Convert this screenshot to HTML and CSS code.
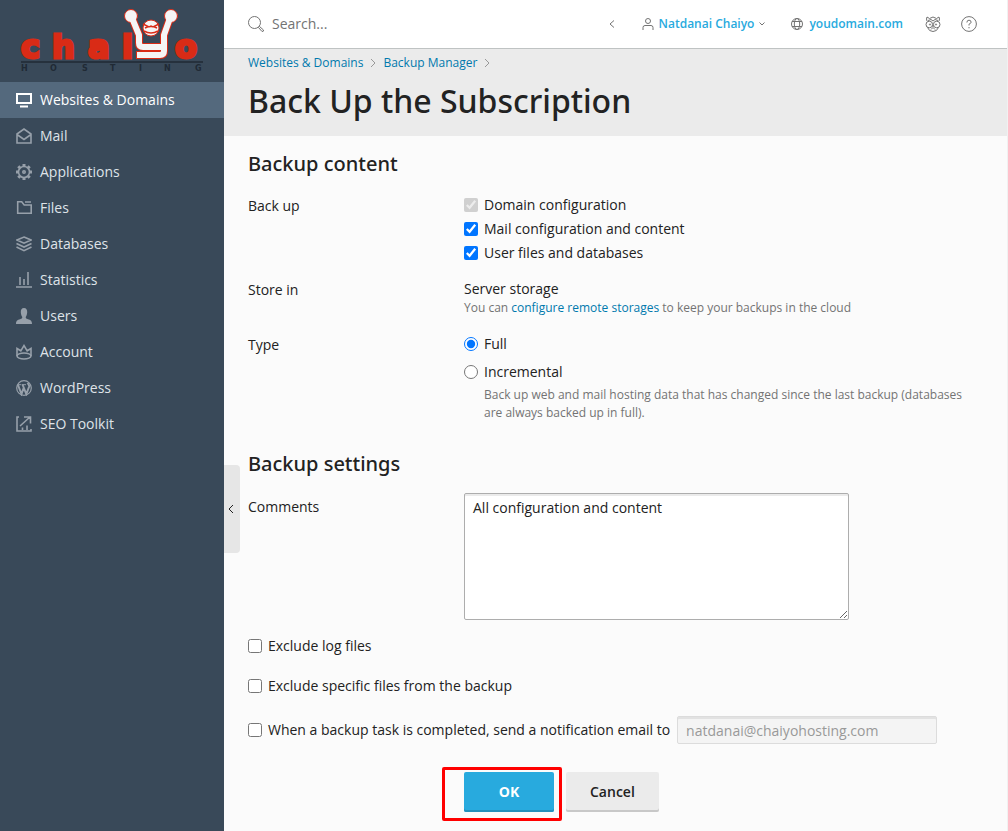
FILE: index.html
```html
<!DOCTYPE html>
<html lang="en">
<head>
  <meta charset="UTF-8">
  <meta name="viewport" content="width=device-width, initial-scale=1.0">
  <title>Back Up the Subscription</title>
  <link rel="stylesheet" href="styles.css">
</head>
<body>
  <div class="page">
    <aside class="sidebar">
      <a href="#" class="logo" aria-label="Chaiyo Hosting">
        <svg width="224" height="82" viewBox="0 0 224 82">
          <text class="logo-name" y="58" x="21 52 88 122 175">chaio</text>
          <path d="M21 62h182" stroke="#26313d" stroke-width="2"/>
          <text class="logo-sub" y="71" x="21 50 82 110 139 164 195">HOSTING</text>
          <!-- cheering figure -->
          <g fill="none" stroke-linecap="square" stroke-linejoin="round">
            <path d="M132 18l7 17v8q0 4 4 4h20M170 18l-6 17v16q0 4-4 4h-20" stroke="#d92b16" stroke-width="8"/>
            <circle cx="131" cy="16" r="6.5" fill="#f5f5f5" stroke="#d92b16"/>
            <circle cx="171" cy="16" r="6.5" fill="#f5f5f5" stroke="#d92b16"/>
            <path d="M132 18l7 17v8q0 4 4 4h20M170 18l-6 17v16q0 4-4 4h-20" stroke="#f5f5f5" stroke-width="6"/>
          </g>
          <path d="M140 51h20" stroke="#d92b16"/>
          <circle cx="151" cy="28" r="8" fill="#f5f5f5" stroke="#d92b16"/>
          <path d="M143 24l6 3 2-1 2 1 6-3M145 28q6-3 12 0M144 31q7 4 14 0" fill="none" stroke="#d92b16" stroke-width="1.5"/>
        </svg>
      </a>
      <nav class="menu">
        <a href="#" class="menu-item active">
          <svg class="icon" viewBox="0 0 16 16"><path d="M1 2h14v9H1zM4 14.5h8" stroke-width="2"/></svg>
          Websites &amp; Domains
        </a>
        <a href="#" class="menu-item">
          <svg class="icon" viewBox="0 0 16 16"><path d="M1 6l7-5 7 5v9H1zM1 6.5l7 5 7-5"/></svg>
          Mail
        </a>
        <a href="#" class="menu-item">
          <svg class="icon" viewBox="0 0 16 16"><circle cx="8" cy="8" r="5.500"/><circle cx="8" cy="8" r="1.200"/><path d="M8 0v2.500M8 13.500v2.500M0 8h2.500M13.500 8h2.500M2.300 2.300l1.700 1.700M12 12l1.700 1.700M13.700 2.300L12 4M4 12l-1.700 1.700" stroke-width="3"/></svg>
          Applications
        </a>
        <a href="#" class="menu-item">
          <svg class="icon" viewBox="0 0 16 16"><path d="M1.700 1.700h4l2.500 3.300h7v8.300H1.700zM9 2h6"/></svg>
          Files
        </a>
        <a href="#" class="menu-item">
          <svg class="icon" viewBox="0 0 16 16"><path d="M8 1l7 3-7 3.200L1 4zM.5 7.500L8 11l7.500-3.500M.5 11L8 14.700 15.500 11"/></svg>
          Databases
        </a>
        <a href="#" class="menu-item">
          <svg class="icon" viewBox="0 0 16 16"><path d="M0 15h16M4 5v8M8 7v6M12 0v13"/></svg>
          Statistics
        </a>
        <a href="#" class="menu-item">
          <svg class="icon solid" viewBox="0 0 16 16"><path d="M8 0c2.300 0 3.300 1.700 3.200 4.200C11.100 6.500 10.300 8 9.700 9c0 1.400.6 1.700 2.300 2.200 2.500.7 4 1.300 4 4.800H0c0-3.500 1.500-4.100 4-4.800 1.700-.5 2.300-.8 2.300-2.200-.6-1-1.400-2.500-1.500-4.800C4.700 1.700 5.700 0 8 0z"/></svg>
          Users
        </a>
        <a href="#" class="menu-item">
          <svg class="icon" viewBox="0 0 16 16"><path d="M1 12V4.500l3.800 2.300L8 1.500l3.200 5.300L15 4.500V12"/><ellipse cx="8" cy="12" rx="7" ry="3"/></svg>
          Account
        </a>
        <a href="#" class="menu-item">
          <svg class="icon" viewBox="0 0 16 16"><circle cx="8" cy="8" r="7.300" stroke-width="1.200"/><path d="M2 5l3.500 9L8 7M6.500 4.500L10.300 14 13 7c.7-2-.9-2.600-1.300-4" stroke-width="2"/><path d="M1.700 4.700h3.600M6 4.700h4" stroke-width="1"/></svg>
          WordPress
        </a>
        <a href="#" class="menu-item">
          <svg class="icon" viewBox="0 0 16 16"><path d="M3 1H1v14h14v-2M4 10l10-9M8 1h6.500v6.500M6.500 14v-2.500M11 14v-4.500"/></svg>
          SEO Toolkit
        </a>
      </nav>
    </aside>

    <div class="main">
      <button type="button" class="collapse" aria-label="Collapse sidebar">
        <svg width="6" height="10" viewBox="0 0 6 10"><path d="M5 1L1 5l4 4"/></svg>
      </button>

      <header class="topbar">
        <label class="search">
          <svg width="16" height="16" viewBox="0 0 16 16"><circle cx="6.500" cy="6.500" r="6"/><path d="M10.500 11.500l1-1 4 3.500q.5 1.500-1.500 1.500z"/></svg>
          <input type="search" placeholder="Search..." aria-label="Search">
        </label>
        <div class="tools">
          <a href="#" class="tool back" aria-label="Back">
            <svg width="6" height="8" viewBox="0 0 6 8"><path d="M5 .5L1 4l4 3.500"/></svg>
          </a>
          <a href="#" class="tool account">
            <svg width="12" height="12" viewBox="0 0 12 12"><circle cx="6" cy="3" r="2.500"/><path d="M1 12V9.500Q1 7.500 3 7.500h6q2 0 2 2V12"/></svg>
            Natdanai Chaiyo
            <svg class="caret" width="6" height="4" viewBox="0 0 6 4"><path d="M.5.5L3 3 5.500.5"/></svg>
          </a>
          <a href="#" class="tool domain">
            <svg width="12" height="12" viewBox="0 0 12 12"><circle cx="6" cy="6" r="5.500"/><ellipse cx="6" cy="6" rx="2.700" ry="5.500"/><path d="M1 3.500h10M1 8.500h10"/></svg>
            youdomain.com
          </a>
          <a href="#" class="tool mascot" aria-label="Advisor">
            <svg width="16" height="16" viewBox="0 0 16 16"><path d="M2 5q-1-2 0-4l2.500 1.500Q8-.5 11.500 2.500L14 1q1 2 0 4M3 4.500l3-1L8 5l2-1.500 3 1M2.500 11.500q1.500 4 5.500 4t5.500-4M8 9v2M6 13.500l2-2 2 2"/><circle cx="4.300" cy="8.500" r="3.300"/><circle cx="11.700" cy="8.500" r="3.300"/><circle cx="5" cy="8.500" r=".6"/><circle cx="11" cy="8.500" r=".6"/></svg>
          </a>
          <a href="#" class="tool help" aria-label="Help">
            <svg width="16" height="16" viewBox="0 0 16 16"><circle cx="8" cy="8" r="7.400"/><path d="M5.900 6.500q0-2.300 2.100-2.300t2.100 2Q10.100 7.300 8 8.200v1.300M8 11v1.300"/></svg>
          </a>
        </div>
      </header>

      <div class="page-head">
        <nav class="breadcrumb">
          <a href="#">Websites &amp; Domains</a>
          <svg width="6" height="10" viewBox="0 0 6 10"><path d="M1 1l4 4-4 4"/></svg>
          <a href="#">Backup Manager</a>
          <svg width="6" height="10" viewBox="0 0 6 10"><path d="M1 1l4 4-4 4"/></svg>
        </nav>
        <h1>Back Up the Subscription</h1>
      </div>

      <form class="content">
        <h2>Backup content</h2>
        <div class="row">
          <div class="row-label">Back up</div>
          <div class="options">
            <label class="option"><input type="checkbox" checked disabled> Domain configuration</label>
            <label class="option"><input type="checkbox" checked> Mail configuration and content</label>
            <label class="option"><input type="checkbox" checked> User files and databases</label>
          </div>
        </div>
        <div class="row">
          <div class="row-label">Store in</div>
          <div>
            <div>Server storage</div>
            <p class="hint">You can <a href="#">configure remote storages</a> to keep your backups in the cloud</p>
          </div>
        </div>
        <div class="row">
          <div class="row-label">Type</div>
          <div class="options types">
            <label class="option"><input type="radio" name="type" checked> Full</label>
            <div>
              <label class="option"><input type="radio" name="type"> Incremental</label>
              <p class="hint type-hint">Back up web and mail hosting data that has changed since the last backup (databases are always backed up in full).</p>
            </div>
          </div>
        </div>

        <h2 class="settings-title">Backup settings</h2>
        <div class="row comments-row">
          <label class="row-label" for="comments">Comments</label>
          <textarea id="comments">All configuration and content</textarea>
        </div>
        <div class="single">
          <label class="option"><input type="checkbox"> Exclude log files</label>
        </div>
        <div class="single">
          <label class="option"><input type="checkbox"> Exclude specific files from the backup</label>
        </div>
        <div class="single notify">
          <label class="option"><input type="checkbox"> When a backup task is completed, send a notification email to</label>
          <input type="email" class="email" value="natdanai@chaiyohosting.com" aria-label="Notification email" disabled>
        </div>

        <div class="buttons">
          <div class="marked">
            <button type="submit" class="btn primary">OK</button>
          </div>
          <button type="button" class="btn cancel">Cancel</button>
        </div>
      </form>
    </div>
  </div>
</body>
</html>
```
FILE: styles.css
```css
* {
  box-sizing: border-box;
}
body {
  margin: 0;
  font: 14px/20px "Open Sans", "Noto Sans", sans-serif;
  color: #222;
  background: #fbfbfb;
}
a {
  color: #0079ad;
  text-decoration: none;
}
svg {
  flex: none;
  fill: none;
}
h1, h2, p {
  margin: 0;
}
h1, h2 {
  font-family: "Noto Sans", "Open Sans", sans-serif;
  font-weight: 500;
}
.page {
  display: flex;
  min-height: 100vh;
}

/* sidebar */
.sidebar {
  flex: none;
  width: 224px;
  background: #394959;
}
.logo {
  display: block;
  height: 82px;
}
.logo-name {
  font: bold 32px "DejaVu Sans", sans-serif;
  fill: #d92b16;
  stroke: #d92b16;
  stroke-width: 3px;
}
.logo-sub {
  font: bold 8px "DejaVu Sans", sans-serif;
  fill: #202a35;
}
.menu-item {
  display: flex;
  align-items: center;
  gap: 8px;
  height: 36px;
  padding-left: 16px;
  color: #dfe3e8;
}
.menu-item.active {
  color: #fff;
  background: #54697d;
}
.icon {
  width: 16px;
  height: 16px;
  stroke: #97a0aa;
  stroke-width: 1.6;
}
.icon.solid {
  fill: #97a0aa;
  stroke: none;
}
.active .icon {
  stroke: #fff;
}

/* top bar */
.main {
  position: relative;
  flex: 1;
  min-width: 0;
  border-right: 1px solid #f1f1f1;
}
.topbar {
  display: flex;
  align-items: center;
  justify-content: space-between;
  height: 49px;
  padding: 0 30px 0 24px;
  background: #fff;
  border-bottom: 1px solid #bfc3c3;
}
.topbar svg {
  stroke: #737373;
}
.search {
  display: flex;
  align-items: center;
  gap: 8px;
}
.search input {
  width: 200px;
  padding: 0;
  border: 0;
  outline: none;
  font: inherit;
  background: none;
}
.search input::placeholder {
  color: #737373;
}
.tools {
  display: flex;
  align-items: center;
}
.tool {
  display: flex;
  align-items: center;
  font-size: 12px;
  font-weight: 600;
  color: #28aade;
}
.account {
  gap: 5px;
  margin-left: 27px;
}
.domain {
  gap: 6px;
  margin-left: 26px;
}
.mascot {
  margin-left: 22px;
}
.help {
  margin-left: 20px;
}

/* page heading */
.page-head {
  height: 87px;
  padding: 4px 24px 0;
  background: #ebebeb;
}
.breadcrumb {
  display: flex;
  align-items: center;
  gap: 7px;
  font-size: 12px;
}
.breadcrumb svg {
  stroke: #999;
}
h1 {
  padding-top: 8px;
  font-size: 32px;
  line-height: 40px;
}
.collapse {
  position: absolute;
  top: 465px;
  left: 0;
  width: 16px;
  height: 88px;
  padding: 0 2px 0 0;
  border: 0;
  border-radius: 0 4px 4px 0;
  background: #e6e6e6;
}
.collapse svg {
  stroke: #222;
}

/* form */
.content {
  padding: 13px 24px 20px;
}
h2 {
  font-size: 20px;
  line-height: 30px;
}
.row {
  display: grid;
  grid-template-columns: 192px 1fr;
  column-gap: 24px;
  margin-top: 16px;
}
.row-label {
  padding-top: 1px;
}
.options {
  display: flex;
  flex-direction: column;
  gap: 4px;
}
.types {
  gap: 8px;
}
.option {
  display: flex;
  align-items: center;
  gap: 6px;
}
.option input {
  flex: none;
  width: 14px;
  height: 14px;
  margin: 0;
}
.hint {
  padding-bottom: 1px;
  font-size: 12px;
  line-height: 18px;
  color: #737373;
}
.type-hint {
  max-width: 500px;
  padding: 4px 0 0 20px;
}
.settings-title {
  margin-top: 27px;
}
.comments-row {
  margin-top: 14px;
}
.comments-row .row-label {
  padding-top: 4px;
}
textarea {
  display: block;
  width: 385px;
  max-width: 100%;
  height: 127px;
  padding: 4px 8px;
  border: 1px solid #adadad;
  border-radius: 2px;
  outline: none;
  font: inherit;
  color: #222;
  background: #fff;
  box-shadow: inset 0 2px 0 #ebebeb;
}
.single {
  margin-top: 20px;
}
.comments-row + .single {
  margin-top: 16px;
}
.notify {
  display: flex;
  align-items: center;
  gap: 7px;
}
.email {
  width: 260px;
  height: 28px;
  padding: 0 8px;
  border: 1px solid #dcdcdc;
  border-radius: 2px;
  font: inherit;
  color: #999;
  background: #f4f4f4;
  box-shadow: inset 0 2px 0 #e2e2e2;
}
.buttons {
  display: flex;
  gap: 12px;
  margin-top: 28px;
  padding-left: 216px;
}
.btn {
  min-width: 90px;
  height: 40px;
  padding: 0 24px;
  border: 0;
  border-radius: 2px;
  font: 600 14px/20px "Open Sans", "Noto Sans", sans-serif;
  color: #222;
  background: #ebebeb;
  box-shadow: inset 0 -2px 0 #c8c8c8;
}
.btn.primary {
  font-weight: 700;
  color: #fff;
  background: #28aade;
  box-shadow: inset 0 -2px 0 #2391bd;
}
/* red frame round the main button */
.marked {
  position: relative;
}
.marked::after {
  content: "";
  position: absolute;
  inset: -5px -8px -9px -22px;
  border: 3px solid #f00;
  border-radius: 2px;
  pointer-events: none;
}
```
